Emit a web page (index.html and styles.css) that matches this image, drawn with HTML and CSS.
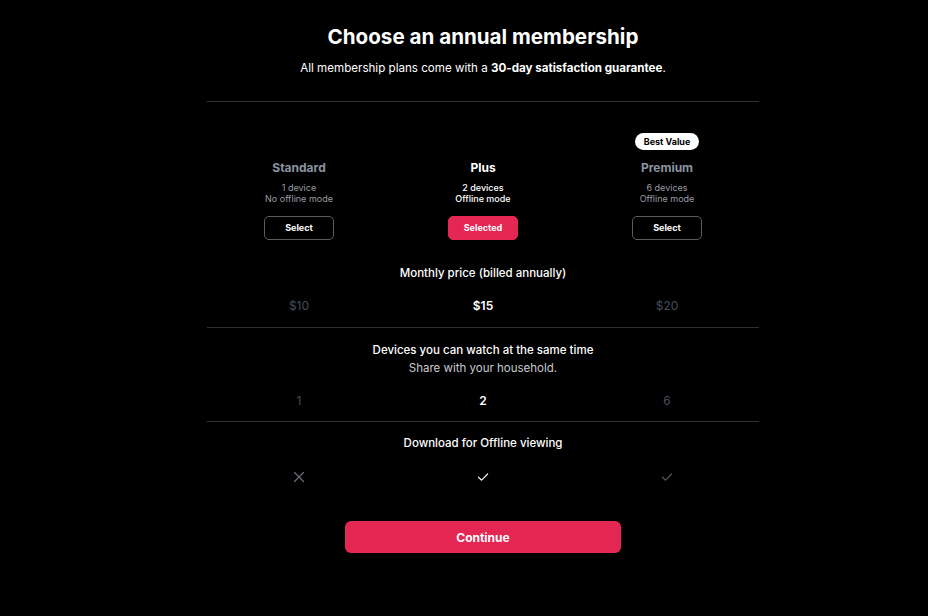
FILE: index.html
```html
<!DOCTYPE html>
<html lang="en">
<head>
<meta charset="utf-8">
<title>Choose an annual membership</title>
<link rel="stylesheet" href="styles.css">
</head>
<body>
<main class="page">
  <div class="wrap">
    <h1 class="title">Choose an annual membership</h1>
    <p class="subtitle">All membership plans come with a <strong>30-day satisfaction guarantee</strong>.</p>
    <div class="rule"></div>

    <div class="plans">
      <div class="plan">
        <div class="badge-slot"></div>
        <div class="plan-name">Standard</div>
        <div class="plan-desc">1 device<br>No offline mode</div>
        <button class="btn-select">Select</button>
      </div>
      <div class="plan plan-active">
        <div class="badge-slot"></div>
        <div class="plan-name">Plus</div>
        <div class="plan-desc">2 devices<br>Offline mode</div>
        <button class="btn-select btn-selected">Selected</button>
      </div>
      <div class="plan">
        <div class="badge-slot"><span class="badge">Best Value</span></div>
        <div class="plan-name">Premium</div>
        <div class="plan-desc">6 devices<br>Offline mode</div>
        <button class="btn-select">Select</button>
      </div>
    </div>

    <section class="feature feature-price">
      <div class="feature-title">Monthly price (billed annually)</div>
      <div class="values">
        <span class="val">$10</span>
        <span class="val val-active">$15</span>
        <span class="val">$20</span>
      </div>
    </section>
    <div class="rule"></div>

    <section class="feature feature-devices">
      <div class="feature-title">Devices you can watch at the same time</div>
      <div class="feature-sub">Share with your household.</div>
      <div class="values">
        <span class="val">1</span>
        <span class="val val-active">2</span>
        <span class="val">6</span>
      </div>
    </section>
    <div class="rule"></div>

    <section class="feature feature-offline">
      <div class="feature-title">Download for Offline viewing</div>
      <div class="values icons">
        <span class="val"><svg class="ico ico-x" viewBox="0 0 12 12" width="12" height="12"><path d="M1.5 1.5 L10.5 10.5 M10.5 1.5 L1.5 10.5"/></svg></span>
        <span class="val"><svg class="ico ico-on" viewBox="0 0 12 12" width="12" height="12"><path d="M1.5 6.2 L4.6 9.2 L10.6 3"/></svg></span>
        <span class="val"><svg class="ico ico-dim" viewBox="0 0 12 12" width="12" height="12"><path d="M1.5 6.2 L4.6 9.2 L10.6 3"/></svg></span>
      </div>
    </section>

    <div class="cta-row">
      <button class="btn-continue">Continue</button>
    </div>
  </div>
</main>
</body>
</html>
```

FILE: styles.css
```css
* { box-sizing: border-box; }

html, body {
  margin: 0;
  background: #000;
}

body {
  font-family: Inter, "Liberation Sans", Arial, sans-serif;
  color: #fff;
}

.page {
  padding: 25px 0 40px 38px;
}

.wrap {
  width: 552px;
  margin: 0 auto;
  text-align: center;
}

.title {
  margin: 0;
  font-size: 20.6px;
  line-height: 24px;
  font-weight: 700;
  letter-spacing: 0;
}

.subtitle {
  margin: 11px 0 0;
  font-size: 11.6px;
  line-height: 16px;
  font-weight: 400;
}

.subtitle strong {
  font-weight: 700;
}

.rule {
  height: 1px;
  background: #2e2f33;
}

.subtitle + .rule {
  margin-top: 25px;
}

.plans {
  display: grid;
  grid-template-columns: repeat(3, 1fr);
  padding-top: 31px;
}

.plan {
  display: flex;
  flex-direction: column;
  align-items: center;
}

.badge-slot {
  height: 17px;
  display: flex;
  justify-content: center;
}

.badge {
  display: inline-block;
  background: #fff;
  color: #000;
  font-size: 9px;
  font-weight: 700;
  line-height: 17px;
  padding: 0 9px;
  border-radius: 9px;
}

.plan-name {
  margin-top: 10px;
  font-size: 12px;
  line-height: 16px;
  font-weight: 700;
  color: #8c93a0;
}

.plan-desc {
  margin-top: 6px;
  font-size: 9px;
  line-height: 11px;
  color: #9a9ca3;
}

.plan-active .plan-name,
.plan-active .plan-desc {
  color: #fff;
}

.plan-active .plan-desc {
  font-weight: 500;
}

.btn-select {
  margin-top: 12px;
  width: 70px;
  height: 24px;
  border: 1.5px solid #5a5c62;
  border-radius: 5px;
  background: #000;
  color: #fff;
  font-family: inherit;
  font-size: 9px;
  font-weight: 700;
  padding: 0 0 1px;
}

.btn-selected {
  background: #e32652;
  border-color: #e32652;
}

.feature {
  padding-top: 13px;
  padding-bottom: 13px;
}

.feature-price {
  padding-top: 25px;
}

.feature-devices {
  padding-bottom: 12px;
}

.feature-offline {
  padding-top: 12px;
}

.feature-title {
  font-size: 11.5px;
  line-height: 18px;
  font-weight: 500;
}

.feature-price .feature-title {
  line-height: 16px;
}

.feature-sub {
  font-size: 11.5px;
  line-height: 18px;
  color: #c9cbd0;
}

.values {
  display: grid;
  grid-template-columns: repeat(3, 1fr);
  margin-top: 16px;
}

.feature-price .values {
  margin-top: 17px;
}

.val {
  font-size: 12px;
  line-height: 16px;
  color: #454d5a;
}

.val-active {
  color: #fff;
  font-weight: 600;
}

.icons {
  margin-top: 17px;
}

.icons .val {
  display: flex;
  justify-content: center;
  align-items: center;
  height: 16px;
}

.ico {
  fill: none;
  stroke-width: 1.2;
  stroke-linecap: round;
  stroke-linejoin: round;
}

.ico-x { stroke: #6f7079; }
.ico-on { stroke: #f2f2f2; }
.ico-dim { stroke: #55565c; }

.cta-row {
  display: flex;
  justify-content: center;
  margin-top: 23px;
}

.btn-continue {
  width: 276px;
  height: 32px;
  border: 0;
  border-radius: 6px;
  background: #e32652;
  color: #fff;
  font-family: inherit;
  font-size: 12px;
  font-weight: 700;
}
```
